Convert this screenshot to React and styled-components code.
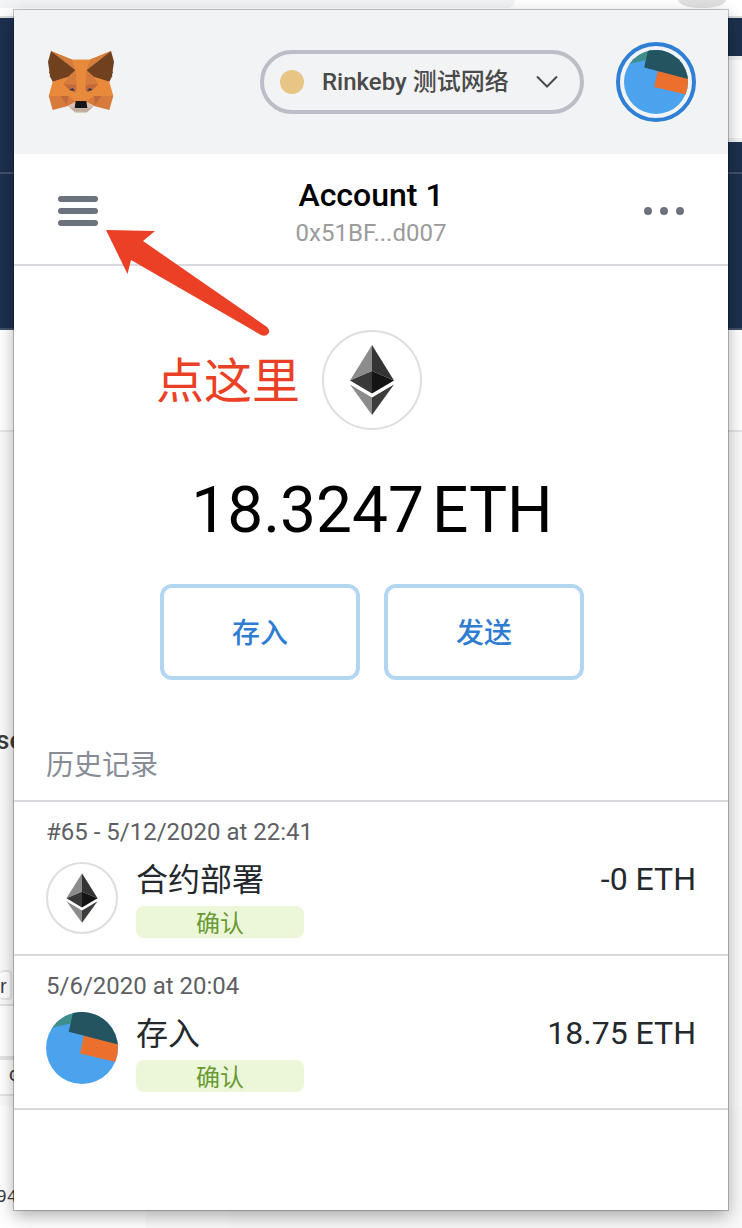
import React from 'react';
import styled, { createGlobalStyle } from 'styled-components';

const GlobalStyle = createGlobalStyle`
  *, *::before, *::after { box-sizing: border-box; }
  body {
    margin: 0;
    background: #fafafa;
    font-family: Roboto, "Noto Sans CJK SC", sans-serif;
  }
  button, select { font: inherit; color: inherit; }
`;

const Page = styled.div`
  display: grid;
  grid-template-columns: minmax(0, 1fr);
  min-height: 100vh;
  overflow: hidden;
`;

/* The browser page that lies under the wallet popup */
const Backdrop = styled.div`
  grid-area: 1 / 1;
  display: flex;
  flex-direction: column;
  color: #3c3c3c;
`;

const BrowserBar = styled.div`
  display: flex;
  justify-content: space-between;
  height: 18px;
  padding-right: 16px;
  background: #fff;
  border-bottom: 2px solid #dcdddf;
`;

const AddressField = styled.div`
  width: 71%;
  height: 8px;
  background: #f1f3f4;
  border-radius: 0 0 20px 0;
`;

const ProfileDot = styled.div`
  width: 48px;
  height: 8px;
  background: #e0e0e0;
  border-radius: 0 0 24px 24px / 0 0 8px 8px;
`;

const SiteHeader = styled.div`
  height: 156px;
  background: #1c304e;
  border-bottom: 2px solid #41506a;
  padding-top: 38px;
`;

const SearchField = styled.div`
  width: 50%;
  height: 86px;
  margin-left: auto;
  background: #fff;
  border: solid #f1f2f4;
  border-width: 4px 0;
`;

const SiteHero = styled.div`
  height: 156px;
  background: #1c304e;
  border-bottom: 2px solid #41506a;
`;

const SiteTabs = styled.div`
  height: 102px;
  background: #fff;
  border-bottom: 2px solid #e6e6ea;
`;

const SiteHeading = styled.div`
  height: 538px;
  padding-top: 292px;
  margin-left: -4px;
  font: 500 26px/32px Roboto, sans-serif;
`;

const SiteField = styled.div`
  height: ${(p) => p.$height}px;
  width: ${(p) => p.$width};
  padding-left: ${(p) => p.$indent}px;
  margin-bottom: ${(p) => p.$after}px;
  background: #fff;
  border: 2px solid #e4e4e6;
  border-left: 0;
  border-radius: ${(p) => p.$radius}px;
  font: 20px/28px "Liberation Sans", sans-serif;
`;

const SiteColumns = styled.div`
  flex: 1;
  display: grid;
  grid-template-columns: 146px 82px 1fr;
  background: #fafafa;
`;

const SiteColumn = styled.div`
  padding-top: 80px;
  margin-left: ${(p) => p.$pull || 0}px;
  background: ${(p) => p.$tone};
  font: 18px/22px "Liberation Mono", monospace;
`;

const Popup = styled.main`
  grid-area: 1 / 1;
  position: relative;
  margin: 10px 14px 18px;
  background: #fff;
  box-shadow: 0 0 0 1px rgba(0, 0, 0, 0.22), 0 6px 16px rgba(0, 0, 0, 0.32);
`;

const Header = styled.header`
  display: flex;
  align-items: center;
  gap: 32px;
  height: 144px;
  padding: 0 32px 0 34px;
  background: #f2f3f5;
`;

const Logo = styled.a`
  display: flex;
  margin-right: auto;
`;

const NetworkPicker = styled.label`
  display: flex;
  align-items: center;
  gap: 18px;
  width: 324px;
  height: 64px;
  padding: 0 22px 0 16px;
  border: 4px solid #bbbec6;
  border-radius: 32px;
  color: #4a4a4a;
`;

const NetworkDot = styled.span`
  flex: none;
  width: 24px;
  height: 24px;
  border-radius: 50%;
  background: #e8c585;
`;

const NetworkSelect = styled.select`
  flex: 1;
  min-width: 0;
  height: 40px;
  padding: 0;
  border: 0;
  outline: 0;
  appearance: none;
  background: none;
  font-size: 24px;
  font-weight: 500;
  line-height: 40px;
`;

const AccountButton = styled.button`
  display: flex;
  width: 80px;
  height: 80px;
  padding: 4px;
  border: 4px solid #2f7fd4;
  border-radius: 50%;
  background: none;
`;

const AccountBar = styled.section`
  display: flex;
  align-items: center;
  justify-content: space-between;
  height: 112px;
  padding: 0 44px;
  border-bottom: 2px solid #d8d9de;
`;

const IconButton = styled.button`
  display: flex;
  padding: 4px 0 0;
  border: 0;
  background: none;
  color: #6d727f;
`;

const AccountInfo = styled.div`
  padding-top: 10px;
  text-align: center;
`;

const AccountName = styled.h1`
  margin: 0;
  font-size: 32px;
  font-weight: 500;
  line-height: 38px;
  color: #000;
`;

const AccountAddress = styled.div`
  font-size: 24px;
  line-height: 38px;
  color: #9b9b9b;
`;

const Overview = styled.section`
  display: flex;
  flex-direction: column;
  align-items: center;
  padding: 64px 0 48px 2px;
`;

const TokenRing = styled.span`
  flex: none;
  display: flex;
  width: ${(p) => p.$size}px;
  height: ${(p) => p.$size}px;
  border: 2px solid #dedede;
  border-radius: 50%;
`;

const Balance = styled.div`
  display: flex;
  gap: 8px;
  margin-top: 40px;
  font-size: 64px;
  line-height: 82px;
  color: #000;
`;

const Actions = styled.div`
  display: flex;
  gap: 24px;
  margin-top: 32px;
`;

const ActionButton = styled.button`
  width: 200px;
  height: 96px;
  padding: 4px 0 0;
  border: 4px solid #b3d7f1;
  border-radius: 12px;
  background: #fff;
  color: #2f7cd3;
  font-size: 28px;
  font-weight: 500;
  line-height: 40px;
`;

const HistoryTitle = styled.h2`
  margin: 0;
  padding: 4px 32px 0;
  border-bottom: 2px solid #d8d9de;
  font-size: 28px;
  font-weight: 400;
  line-height: 68px;
  color: #878c96;
`;

const HistoryList = styled.ul`
  margin: 0;
  padding: 0;
  list-style: none;
`;

const HistoryItem = styled.li`
  padding: 14px 32px 16px;
  border-bottom: 2px solid #d8d9de;
`;

const ItemDate = styled.div`
  margin-bottom: 10px;
  font-size: 24px;
  line-height: 32px;
  color: #5d5f64;
`;

const ItemBody = styled.div`
  display: flex;
  gap: 18px;
`;

const ItemIcon = styled.span`
  flex: none;
  display: flex;
  width: 72px;
  padding-top: ${(p) => (p.$ringed ? 4 : 0)}px;
  align-items: flex-start;
`;

const ItemMain = styled.div`
  flex: 1;
  padding-top: 2px;
  font-size: 32px;
  line-height: 40px;
  color: #24292e;
`;

const ItemStatus = styled.div`
  width: 168px;
  margin-top: 6px;
  padding-top: 4px;
  border-radius: 8px;
  background: #ecf7da;
  color: #6a9a32;
  font-size: 24px;
  line-height: 28px;
  text-align: center;
`;

const ItemAmount = styled.div`
  font-size: 32px;
  line-height: 42px;
  color: #24292e;
`;

const ArrowMark = styled.svg`
  position: absolute;
  left: 90px;
  top: 218px;
  pointer-events: none;
`;

const ArrowNote = styled.div`
  position: absolute;
  left: 142px;
  top: 340px;
  font-size: 48px;
  line-height: 64px;
  color: #eb4026;
`;

function Fox() {
  const half = (
    <>
      <polygon points="9,0 73,26 99,26 99,150 60,163 14,92 83,58" fill="#e8893c" />
      <polygon points="9,0 73,26 83,58" fill="#d67d3c" />
      <polygon points="9,0 0,32 4,60 3,66 6,70 5,76 8,80 14,92 60,78 83,58" fill="#70401f" />
      <polygon points="60,78 83,58 86,106 46,99" fill="#d67b3b" />
      <polygon points="14,92 60,78 46,99 60,135 2,135" fill="#e8893c" />
      <polygon points="46,99 84,102 86,116 80,124 64,118" fill="#c0693a" />
      <polygon points="46,99 64,118 80,124 86,116 83,150 60,135" fill="#e8893c" />
      <polygon points="2,135 60,135 82,150 60,165 14,177" fill="#d67b3b" />
      <polygon points="38,135 61,135 57,163" fill="#c0693a" />
      <polygon points="64,117 74,111 80,120" fill="#263546" />
      <polygon points="60,165 83,152 99,152 99,185 82,185" fill="#d6c1b4" />
      <polygon points="64,169 82,172 99,172 99,182 80,182" fill="#c0ad9e" />
    </>
  );
  return (
    <svg width="66" height="62" viewBox="0 0 198 186" aria-hidden="true">
      <g>{half}</g>
      <g transform="translate(198 0) scale(-1 1)">{half}</g>
      <polygon points="73,26 125,26 115,58 111,106 116,150 82,150 87,106 83,58" fill="#e8893c" />
      <polygon points="83,150 115,150 118,171 80,171" fill="#161616" />
    </svg>
  );
}

function Identicon({ size, id }) {
  return (
    <svg width={size} height={size} viewBox="0 0 72 72" aria-hidden="true">
      <clipPath id={id}>
        <circle cx="36" cy="36" r="36" />
      </clipPath>
      <g clipPath={`url(#${id})`}>
        <rect width="72" height="72" fill="#4aa3ec" />
        <polygon points="0,0 40,0 40,8 0,17" fill="#3f8e8c" />
        <polygon points="38,23 34,41.5 74,51 76,30" fill="#eb702d" />
        <polygon points="28,-4 22.7,19.8 74,33 74,-4" fill="#24545f" />
      </g>
    </svg>
  );
}

function EthMark() {
  return (
    <svg width="100%" height="100%" viewBox="2 2 96 96" aria-hidden="true">
      <polygon points="50,15 28,50.5 50,41" fill="#8c8c8c" />
      <polygon points="50,15 72,50.5 50,41" fill="#343434" />
      <polygon points="28,50.5 50,41 50,63.5" fill="#393939" />
      <polygon points="72,50.5 50,41 50,63.5" fill="#141414" />
      <polygon points="28,54.5 50,67.5 50,85" fill="#8c8c8c" />
      <polygon points="72,54.5 50,67.5 50,85" fill="#3c3c3b" />
    </svg>
  );
}

const history = [
  { date: '#65 - 5/12/2020 at 22:41', title: '合约部署', status: '确认', amount: '-0 ETH', token: true },
  { date: '5/6/2020 at 20:04', title: '存入', status: '确认', amount: '18.75 ETH', token: false },
];

export default function App() {
  return (
    <Page>
      <GlobalStyle />
      <Backdrop aria-hidden="true">
        <BrowserBar>
          <AddressField />
          <ProfileDot />
        </BrowserBar>
        <SiteHeader>
          <SearchField />
        </SiteHeader>
        <SiteHero />
        <SiteTabs />
        <SiteHeading>se</SiteHeading>
        <SiteField $height={30} $width="12px" $indent={0} $after={4} $radius={4}>r</SiteField>
        <SiteField $height={54} $width="30%" $indent={0} $after={0} $radius={0} />
        <SiteField $height={38} $width="30%" $indent={9} $after={10} $radius={0}>c</SiteField>
        <SiteColumns>
          <SiteColumn $tone="#ffffff" $pull={-4}>94</SiteColumn>
          <SiteColumn $tone="#fafafa" />
          <SiteColumn $tone="#f8f8f8" />
        </SiteColumns>
      </Backdrop>

      <Popup>
        <Header>
          <Logo href="#" aria-label="MetaMask">
            <Fox />
          </Logo>
          <NetworkPicker>
            <NetworkDot />
            <NetworkSelect aria-label="网络" defaultValue="rinkeby">
              <option value="rinkeby">Rinkeby 测试网络</option>
            </NetworkSelect>
            <svg width="22" height="14" viewBox="0 0 22 14" fill="none" stroke="#4a4a4a" strokeWidth="2" aria-hidden="true">
              <path d="M1 1.5 L11 11.5 L21 1.5" />
            </svg>
          </NetworkPicker>
          <AccountButton type="button" aria-label="Account 1">
            <Identicon size={64} id="avatar-header" />
          </AccountButton>
        </Header>

        <AccountBar>
          <IconButton type="button" aria-label="菜单">
            <svg width="40" height="30" viewBox="0 0 40 30" fill="currentColor">
              <rect width="40" height="6" rx="3" />
              <rect y="12" width="40" height="6" rx="3" />
              <rect y="24" width="40" height="6" rx="3" />
            </svg>
          </IconButton>
          <AccountInfo>
            <AccountName>Account 1</AccountName>
            <AccountAddress>0x51BF...d007</AccountAddress>
          </AccountInfo>
          <IconButton type="button" aria-label="更多">
            <svg width="40" height="8" viewBox="0 0 40 8" fill="currentColor">
              <circle cx="4" cy="4" r="4" />
              <circle cx="20" cy="4" r="4" />
              <circle cx="36" cy="4" r="4" />
            </svg>
          </IconButton>
        </AccountBar>

        <Overview>
          <TokenRing $size={100}>
            <EthMark />
          </TokenRing>
          <Balance>
            <span>18.3247</span>
            <span>ETH</span>
          </Balance>
          <Actions>
            <ActionButton type="button">存入</ActionButton>
            <ActionButton type="button">发送</ActionButton>
          </Actions>
        </Overview>

        <HistoryTitle>历史记录</HistoryTitle>
        <HistoryList>
          {history.map((item) => (
            <HistoryItem key={item.date}>
              <ItemDate>{item.date}</ItemDate>
              <ItemBody>
                <ItemIcon $ringed={item.token}>
                  {item.token ? (
                    <TokenRing $size={72}>
                      <EthMark />
                    </TokenRing>
                  ) : (
                    <Identicon size={72} id="avatar-history" />
                  )}
                </ItemIcon>
                <ItemMain>
                  {item.title}
                  <ItemStatus>{item.status}</ItemStatus>
                </ItemMain>
                <ItemAmount>{item.amount}</ItemAmount>
              </ItemBody>
            </HistoryItem>
          ))}
        </HistoryList>

        <ArrowMark width="170" height="112" viewBox="0 0 170 112" aria-hidden="true">
          <path d="M2 2 L51 3 L39 13 L163 99 Q167 103 164 106 Q161 109 157 107 L27 32 L23.5 46 Z" fill="#eb4026" />
        </ArrowMark>
        <ArrowNote>点这里</ArrowNote>
      </Popup>
    </Page>
  );
}
